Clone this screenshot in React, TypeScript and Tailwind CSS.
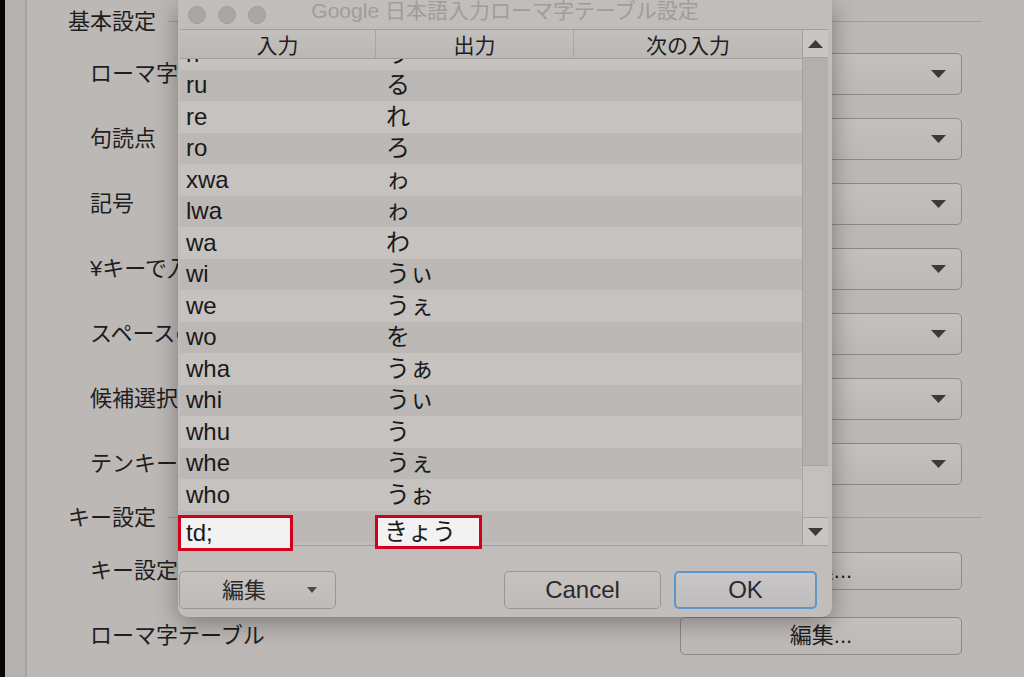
import React from 'react';

const FONT = '"Liberation Sans", "Noto Sans CJK JP", sans-serif';

const romajiRows: [string, string][] = [
  ['ri', 'り'],
  ['ru', 'る'],
  ['re', 'れ'],
  ['ro', 'ろ'],
  ['xwa', 'ゎ'],
  ['lwa', 'ゎ'],
  ['wa', 'わ'],
  ['wi', 'うぃ'],
  ['we', 'うぇ'],
  ['wo', 'を'],
  ['wha', 'うぁ'],
  ['whi', 'うぃ'],
  ['whu', 'う'],
  ['whe', 'うぇ'],
  ['who', 'うぉ'],
];

const basicLabels = ['ローマ字入力・かな入力', '句読点', '記号', '¥キーで入力する文字', 'スペースの入力', '候補選択キー', 'テンキーからの入力'];

const Caret = ({ up = false, className = '' }: { up?: boolean; className?: string }) => (
  <svg width="15" height="8" viewBox="0 0 15 8" className={className}>
    <path d={up ? 'M0 8 L7.5 0 L15 8 Z' : 'M0 0 L15 0 L7.5 8 Z'} fill="#3a3a3a" />
  </svg>
);

const PopupButton = () => (
  <div className="w-[282px] h-[42px] rounded-[5px] border border-[#8d8987] bg-gradient-to-b from-[#c4c0be] to-[#bcb8b6] flex items-center justify-end pr-[15px]">
    <Caret />
  </div>
);

const PushButton = ({ label }: { label: string }) => (
  <div className="w-[282px] h-[38px] rounded-[5px] border border-[#8d8987] bg-gradient-to-b from-[#c4c0be] to-[#bcb8b6] flex items-center justify-center text-[22px] text-[#1e1e1e]">
    {label}
  </div>
);

const SectionHeader = ({ title, className }: { title: string; className: string }) => (
  <div className={`flex items-center pl-[41px] pr-[42px] ${className}`}>
    <span className="text-[22px] text-[#1e1e1e] mr-3">{title}</span>
    <div className="flex-1 border-t border-[#a19d9b]" />
  </div>
);

// labels that run under the dialog keep only the part left of it
const SettingRow = ({ label, clip = true, children }: { label: string; clip?: boolean; children: React.ReactNode }) => (
  <div className="h-[65px] flex items-center pl-[63px] pr-[62px]">
    <span className={`${clip ? 'w-[88px] overflow-hidden' : ''} text-[22px] text-[#1e1e1e] whitespace-nowrap`}>{label}</span>
    <div className="ml-auto">{children}</div>
  </div>
);

const RomajiDialog = () => (
  <div className="absolute left-[178px] top-0 w-[654px] h-[617px] bg-[#c1bdbb] rounded-b-[10px] shadow-[0_6px_24px_rgba(0,0,0,0.35)] flex flex-col">
    {/* title bar */}
    <div className="relative h-[29px] flex items-center pl-[10px] gap-[12px]">
      <span className="w-[18px] h-[18px] rounded-full bg-[#aaa6a4] border border-[#a09c9a]" />
      <span className="w-[18px] h-[18px] rounded-full bg-[#aaa6a4] border border-[#a09c9a]" />
      <span className="w-[18px] h-[18px] rounded-full bg-[#aaa6a4] border border-[#a09c9a]" />
      <span className="absolute inset-x-0 top-0 h-[22px] flex items-center justify-center text-[21px] text-[#a09c9a]">
        Google 日本語入力ローマ字テーブル設定
      </span>
    </div>

    {/* table */}
    <div className="ml-[2px] mr-[4px] h-[517px] border-t border-b border-[#a29e9c] flex">
      <div className="flex-1 flex flex-col">
        <div className="h-[29px] grid grid-cols-[196px_198px_1fr] bg-gradient-to-b from-[#c3bfbd] to-[#bbb7b5] border-b border-[#a29e9c] text-[21px] text-[#1e1e1e]">
          <div className="flex items-center justify-center border-r border-[#a9a5a3]">入力</div>
          <div className="flex items-center justify-center border-r border-[#a9a5a3]">出力</div>
          <div className="flex items-center justify-center">次の入力</div>
        </div>
        <div className="flex-1 [clip-path:inset(0_-4px_-6px_-4px)]">
          <div className="mt-[-21px]">
            {romajiRows.map(([input, output], i) => (
              <div
                key={input + i}
                className={`h-[31.5px] grid grid-cols-[196px_198px_1fr] items-center text-[24px] text-[#1a1a1a] ${i % 2 === 0 ? 'bg-[#c6c2c0]' : 'bg-[#bcb8b6]'}`}
              >
                <span className="pl-[6px] leading-none">{input}</span>
                <span className="pl-[10px] leading-none">{output}</span>
                <span />
              </div>
            ))}
            {/* row being edited */}
            <div className="h-[31.5px] grid grid-cols-[196px_198px_1fr] items-center text-[24px] text-[#1a1a1a] bg-[#bcb8b6]">
              <div className="ml-[-2px] mt-[4px] w-[115px] h-[36px] border-[3px] border-[#d2001a] bg-[#f2f2f2] flex items-center pl-[5px] leading-none">
                td;
              </div>
              <div className="ml-[-1px] mt-[2px] w-[107px] h-[34px] border-[3px] border-[#d2001a] bg-[#f2f2f2] flex items-center pl-[6px] leading-none">
                きょう
              </div>
              <span />
            </div>
          </div>
        </div>
      </div>

      {/* scroller */}
      <div className="w-[26px] bg-[#b3afad] border-l border-[#a5a19f] flex flex-col">
        <div className="h-[28px] bg-[#c9c5c3] border-b border-[#a5a19f] flex items-center justify-center">
          <Caret up />
        </div>
        <div className="flex-1" />
        <div className="h-[53px] bg-[#c4c0be] border-t border-b border-[#a5a19f]" />
        <div className="h-[27px] bg-[#c9c5c3] flex items-center justify-center">
          <Caret />
        </div>
      </div>
    </div>

    {/* footer buttons */}
    <div className="flex items-start pt-[25px] pl-px pr-[15px]">
      <div className="w-[157px] h-[38px] rounded-[5px] border border-[#9a9694] bg-gradient-to-b from-[#c6c2c0] to-[#bfbbb9] flex items-center pl-[42px] pr-[18px] text-[22px] text-[#2a2a2a]">
        <span>編集</span>
        <svg width="10" height="6" viewBox="0 0 10 6" className="ml-auto">
          <path d="M0 0 L10 0 L5 6 Z" fill="#4a4a4a" />
        </svg>
      </div>
      <div className="ml-auto w-[157px] h-[38px] rounded-[5px] border border-[#9a9694] bg-gradient-to-b from-[#c6c2c0] to-[#bfbbb9] flex items-center justify-center text-[24px] text-[#2a2a2a]">
        Cancel
      </div>
      <div className="ml-[13px] w-[143px] h-[38px] rounded-[5px] border-2 border-[#5b96cc] bg-gradient-to-b from-[#c8c6c6] to-[#bebcbd] flex items-center justify-center text-[24px] text-[#2a2a2a]">
        OK
      </div>
    </div>
  </div>
);

export default function App() {
  return (
    <div className="relative w-[1024px] h-[677px] overflow-hidden flex bg-[#bcb8b6]" style={{ fontFamily: FONT }}>
      <div className="w-[5px] bg-[#050505]" />
      <div className="w-[22px] bg-[#b5b1af] border-r-2 border-[#a8a4a2]" />

      {/* preferences pane behind the dialog */}
      <div className="flex-1 flex flex-col">
        <SectionHeader title="基本設定" className="h-[41px] pt-[2px]" />
        {basicLabels.map((label) => (
          <SettingRow key={label} label={label}>
            <PopupButton />
          </SettingRow>
        ))}
        <SectionHeader title="キー設定" className="h-[42px]" />
        <SettingRow label="キー設定の選択">
          <PushButton label="編集..." />
        </SettingRow>
        <SettingRow label="ローマ字テーブル" clip={false}>
          <PushButton label="編集..." />
        </SettingRow>
      </div>

      <RomajiDialog />
    </div>
  );
}
